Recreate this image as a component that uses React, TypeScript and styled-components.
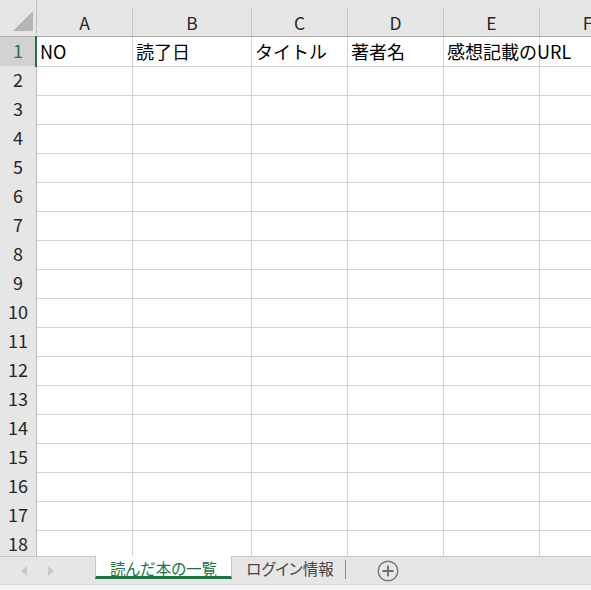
import styled, { createGlobalStyle } from "styled-components";

const GlobalStyle = createGlobalStyle`
  html, body {
    margin: 0;
    padding: 0;
    background: #fff;
  }
  body {
    font-family: "Noto Sans CJK JP", "Noto Sans", sans-serif;
  }
`

const columns = ["A", "B", "C", "D", "E", "F"]
const template = "37px 96px 119px 96px 96px 96px 96px"
const headers = ["NO", "読了日", "タイトル", "著者名", "感想記載のURL", ""]
const rows = Array.from({ length: 18 }, (_, i) => i + 1)

export default function App() {
  return (
    <Window>
      <GlobalStyle />
      <Sheet>
        <HeaderRow>
          <Corner>
            <svg width="37" height="37" viewBox="0 0 37 37">
              <polygon points="13,32 33,32 33,12" fill="#b4b4b4" />
            </svg>
          </Corner>
          {columns.map(c => (
            <ColHead key={c}>{c}</ColHead>
          ))}
        </HeaderRow>
        {rows.map(r => (
          <Row key={r}>
            <RowHead $active={r === 1}>{r}</RowHead>
            {columns.map((c, i) => (
              <Cell key={c} $selected={r === 1 && i === 0}>
                {r === 1 ? headers[i] : ""}
              </Cell>
            ))}
          </Row>
        ))}
      </Sheet>
      <TabBar>
        <Scrollers>
          <Arrow viewBox="0 0 6 10" width="6" height="10">
            <polygon points="6,0 0,5 6,10" fill="#c8c8c8" />
          </Arrow>
          <Arrow viewBox="0 0 6 10" width="6" height="10">
            <polygon points="0,0 6,5 0,10" fill="#c8c8c8" />
          </Arrow>
        </Scrollers>
        <Tab $active>読んだ本の一覧</Tab>
        <Tab>ログイン情報</Tab>
        <Divider />
        <AddButton>
          <svg width="22" height="22" viewBox="0 0 22 22">
            <circle cx="11" cy="11" r="9.8" fill="none" stroke="#7a7a7a" strokeWidth="1.4" />
            <path d="M11 5.5v11M5.5 11h11" stroke="#6a6a6a" strokeWidth="1.8" />
          </svg>
        </AddButton>
      </TabBar>
      <StatusStrip />
    </Window>
  )
}

const Window = styled.div`
  width: 591px;
  height: 590px;
  display: flex;
  flex-direction: column;
  overflow: hidden;
`
const Sheet = styled.div`
  flex: 1;
  overflow: hidden;
  display: flex;
  flex-direction: column;
`
const HeaderRow = styled.div`
  display: grid;
  grid-template-columns: ${template};
  height: 37px;
  flex-shrink: 0;
  background: #e6e6e6;
  box-sizing: border-box;
  border-bottom: 1px solid #ababab;
`
const Corner = styled.div`
  border-right: 1px solid #bdbdbd;
  box-sizing: border-box;
  height: 36px;
  margin-top: -1px;
  svg { display: block; }
`
const ColHead = styled.div`
  margin-top: 8px;
  height: 28px;
  box-sizing: border-box;
  border-right: 1px solid #c8c8c8;
  display: flex;
  align-items: center;
  justify-content: center;
  font-size: 17.5px;
  color: #262626;
  padding-top: 1px;
`
const Row = styled.div`
  display: grid;
  grid-template-columns: ${template};
  height: 29px;
  flex-shrink: 0;
`
const RowHead = styled.div<{ $active?: boolean }>`
  background: ${p => (p.$active ? "#d2d2d2" : "#e6e6e6")};
  color: ${p => (p.$active ? "#217346" : "#262626")};
  border-right: 1px solid #bdbdbd;
  border-bottom: 1px solid #c8c8c8;
  box-sizing: border-box;
  display: flex;
  align-items: center;
  justify-content: center;
  font-size: 18px;
  padding-bottom: 3px;
`
const Cell = styled.div<{ $selected?: boolean }>`
  border-right: 1px solid #d4d4d4;
  border-bottom: 1px solid #d4d4d4;
  box-sizing: border-box;
  display: flex;
  align-items: center;
  padding-left: 3px;
  padding-bottom: 2px;
  font-size: 18px;
  color: #000;
  white-space: nowrap;
  overflow: visible;
  position: relative;
  ${p =>
    p.$selected &&
    `
    &::before {
      content: "";
      position: absolute;
      left: -2px;
      top: -1px;
      bottom: -1px;
      width: 2px;
      background: #217346;
    }
  `}
`
const TabBar = styled.div`
  height: 27px;
  flex-shrink: 0;
  background: #e6e6e6;
  border-top: 1px solid #c6c6c6;
  display: flex;
  align-items: flex-start;
`
const Scrollers = styled.div`
  width: 95px;
  height: 27px;
  display: flex;
  align-items: center;
  padding-left: 21px;
  gap: 21px;
  box-sizing: border-box;
`
const Arrow = styled.svg`
  display: block;
`
const Tab = styled.div<{ $active?: boolean }>`
  height: 23px;
  margin-top: -1px;
  box-sizing: border-box;
  display: flex;
  align-items: center;
  font-size: 15.5px;
  font-feature-settings: "palt";
  padding: 0 ${p => (p.$active ? "14px" : "11px")} 0 14px;
  color: ${p => (p.$active ? "#217346" : "#444")};
  background: ${p => (p.$active ? "#fff" : "transparent")};
  border-left: ${p => (p.$active ? "1px solid #c6c6c6" : "none")};
  border-right: ${p => (p.$active ? "1px solid #c6c6c6" : "none")};
  border-bottom: ${p => (p.$active ? "3px solid #217346" : "none")};
  padding-top: ${p => (p.$active ? "3px" : "0")};
`
const Divider = styled.div`
  width: 1px;
  height: 19px;
  margin-top: 3px;
  background: #8a8a8a;
`
const AddButton = styled.div`
  margin-left: 31px;
  margin-top: 3px;
  svg { display: block; }
`
const StatusStrip = styled.div`
  height: 5px;
  flex-shrink: 0;
  background: #f3f3f3;
  border-top: 1px solid #d6d6d6;
`
